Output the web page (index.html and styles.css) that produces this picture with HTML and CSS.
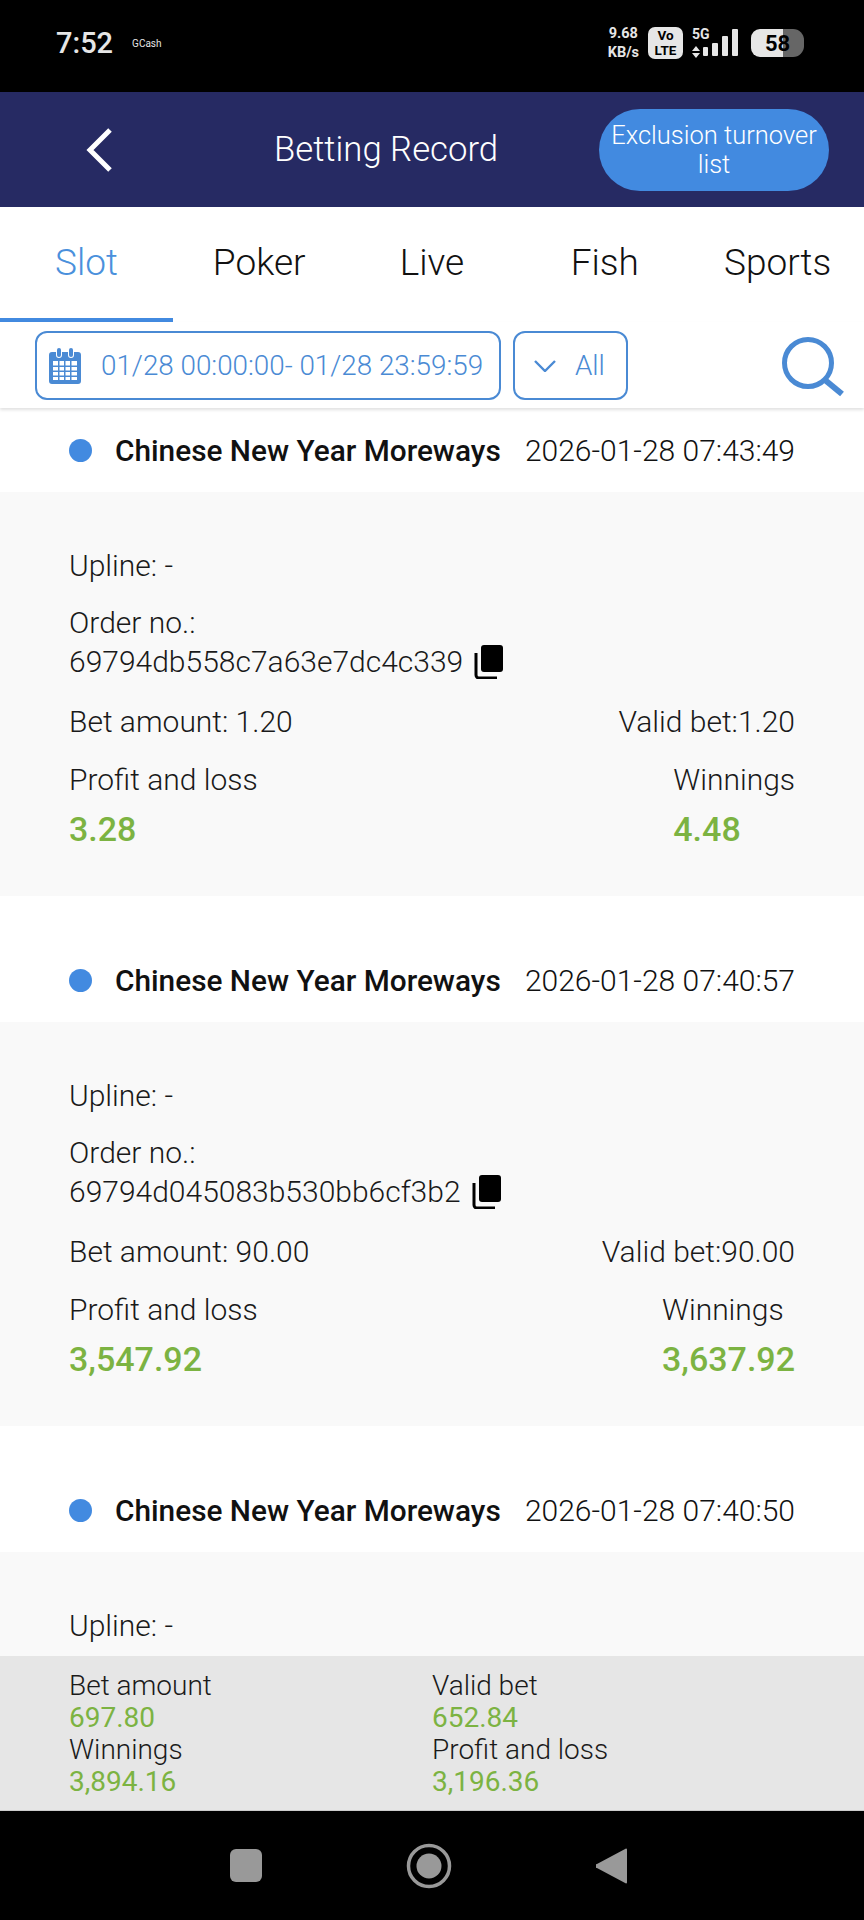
FILE: index.html
```html
<!DOCTYPE html>
<html lang="en">
<head>
    <meta charset="UTF-8">
    <meta name="viewport" content="width=device-width, initial-scale=1.0">
    <title>Betting Record</title>
    <link rel="stylesheet" href="styles.css">
</head>
<body>
    <div class="phone">
        <div class="status-bar">
            <span class="clock">7:52</span>
            <span class="carrier">GCash</span>
            <div class="status-icons">
                <div class="speed"><span>9.68</span><span>KB/s</span></div>
                <div class="volte"><span>Vo</span><span>LTE</span></div>
                <div class="network">
                    <span class="net-label">5G</span>
                    <svg class="arrows" width="8" height="12" viewBox="0 0 8 12"><path d="M4 0L8 5H0zM4 12L0 7h8z" fill="#e6e6e6"/></svg>
                </div>
                <svg class="signal" width="36" height="28" viewBox="0 0 36 28">
                    <rect x="0" y="18" width="5" height="9" rx="1" fill="#e6e6e6"/>
                    <rect x="9" y="14" width="6" height="13" rx="1" fill="#e6e6e6"/>
                    <rect x="19" y="7" width="6" height="20" rx="1" fill="#e6e6e6"/>
                    <rect x="29" y="0" width="6" height="27" rx="1" fill="#e6e6e6"/>
                </svg>
                <div class="battery"><span>58</span></div>
            </div>
        </div>

        <header class="top-bar">
            <svg class="back" width="28" height="46" viewBox="0 0 28 46"><path d="M25 3L5 23l20 20" fill="none" stroke="#ffffff" stroke-width="5"/></svg>
            <div class="title">Betting Record</div>
            <button class="exclusion">Exclusion turnover list</button>
        </header>

        <nav class="tabs">
            <div class="tab active">Slot</div>
            <div class="tab">Poker</div>
            <div class="tab">Live</div>
            <div class="tab">Fish</div>
            <div class="tab">Sports</div>
        </nav>

        <div class="filters">
            <div class="date-box">
                <svg class="calendar" width="32" height="36" viewBox="0 0 32 36">
                    <path d="M3 4h4v3a3 3 0 0 0 6 0V4h6v3a3 3 0 0 0 6 0V4h4a3 3 0 0 1 3 3v26a3 3 0 0 1-3 3H3a3 3 0 0 1-3-3V7a3 3 0 0 1 3-3z" fill="#4a8ad4"/>
                    <rect x="8" y="0" width="4" height="9" rx="2" fill="#4a8ad4"/>
                    <rect x="20" y="0" width="4" height="9" rx="2" fill="#4a8ad4"/>
                    <rect x="4" y="13" width="24" height="19" fill="#ffffff"/>
                    <g fill="#4a8ad4">
                        <rect x="9" y="13" width="1.5" height="19"/>
                        <rect x="15" y="13" width="1.5" height="19"/>
                        <rect x="21" y="13" width="1.5" height="19"/>
                        <rect x="4" y="17.5" width="24" height="1.5"/>
                        <rect x="4" y="22.5" width="24" height="1.5"/>
                        <rect x="4" y="27.5" width="24" height="1.5"/>
                    </g>
                </svg>
                <span>01/28 00:00:00- 01/28 23:59:59</span>
            </div>
            <div class="select-box">
                <svg width="22" height="12" viewBox="0 0 22 12"><path d="M1 1l10 10L21 1" fill="none" stroke="#4a8ad4" stroke-width="2.4"/></svg>
                <span>All</span>
            </div>
            <svg class="search" width="62" height="60" viewBox="0 0 62 60">
                <circle cx="26" cy="26" r="23.5" fill="none" stroke="#4a8ad4" stroke-width="5"/>
                <path d="M43 43l17 14" fill="none" stroke="#4a8ad4" stroke-width="6"/>
            </svg>
        </div>

        <main class="records">
            <section class="record first">
                <div class="record-head">
                    <span class="dot"></span>
                    <span class="game">Chinese New Year Moreways</span>
                    <span class="time">2026-01-28 07:43:49</span>
                </div>
                <div class="record-body">
                    <div class="upline">Upline: -</div>
                    <div class="order">
                        <div>Order no.:</div>
                        <div class="order-id">69794db558c7a63e7dc4c339
                            <svg class="copy" width="30" height="34" viewBox="0 0 30 34"><path d="M2 8v22a3 3 0 0 0 3 3h18" fill="none" stroke="#000000" stroke-width="3"/><rect x="7" y="0" width="22" height="27" rx="3" fill="#000000"/></svg>
                        </div>
                    </div>
                    <div class="amounts"><span>Bet amount: 1.20</span><span>Valid bet:1.20</span></div>
                    <div class="results">
                        <div class="result"><span>Profit and loss</span><strong>3.28</strong></div>
                        <div class="result"><span>Winnings</span><strong>4.48</strong></div>
                    </div>
                </div>
            </section>

            <section class="record">
                <div class="record-head">
                    <span class="dot"></span>
                    <span class="game">Chinese New Year Moreways</span>
                    <span class="time">2026-01-28 07:40:57</span>
                </div>
                <div class="record-body">
                    <div class="upline">Upline: -</div>
                    <div class="order">
                        <div>Order no.:</div>
                        <div class="order-id">69794d045083b530bb6cf3b2
                            <svg class="copy" width="30" height="34" viewBox="0 0 30 34"><path d="M2 8v22a3 3 0 0 0 3 3h18" fill="none" stroke="#000000" stroke-width="3"/><rect x="7" y="0" width="22" height="27" rx="3" fill="#000000"/></svg>
                        </div>
                    </div>
                    <div class="amounts"><span>Bet amount: 90.00</span><span>Valid bet:90.00</span></div>
                    <div class="results">
                        <div class="result"><span>Profit and loss</span><strong>3,547.92</strong></div>
                        <div class="result"><span>Winnings</span><strong>3,637.92</strong></div>
                    </div>
                </div>
            </section>

            <section class="record">
                <div class="record-head">
                    <span class="dot"></span>
                    <span class="game">Chinese New Year Moreways</span>
                    <span class="time">2026-01-28 07:40:50</span>
                </div>
                <div class="record-body">
                    <div class="upline">Upline: -</div>
                </div>
            </section>
        </main>

        <div class="summary">
            <div class="sum-item"><span>Bet amount</span><strong>697.80</strong></div>
            <div class="sum-item"><span>Valid bet</span><strong>652.84</strong></div>
            <div class="sum-item"><span>Winnings</span><strong>3,894.16</strong></div>
            <div class="sum-item"><span>Profit and loss</span><strong>3,196.36</strong></div>
        </div>

        <div class="nav-bar">
            <svg width="32" height="33" viewBox="0 0 32 33"><rect width="32" height="33" rx="6" fill="#999999"/></svg>
            <svg width="46" height="46" viewBox="0 0 46 46"><circle cx="23" cy="23" r="20.5" fill="none" stroke="#999999" stroke-width="3.5"/><circle cx="23" cy="23" r="12.5" fill="#999999"/></svg>
            <svg width="31" height="38" viewBox="0 0 32 38"><path d="M31 1a1 1 0 0 1 1 1v34a1 1 0 0 1-1 1L1 21a2 2 0 0 1 0-4z" fill="#999999"/></svg>
        </div>
    </div>
</body>
</html>
```

FILE: styles.css
```css
body {
    margin: 0;
    font-family: Roboto, "Liberation Sans", sans-serif;
    background-color: #ffffff;
    color: #1a1a1a;
}

.phone {
    width: 864px;
    height: 1920px;
    display: flex;
    flex-direction: column;
    overflow: hidden;
}

/* status bar */
.status-bar {
    height: 92px;
    flex: none;
    background-color: #000000;
    color: #e6e6e6;
    display: flex;
    align-items: center;
    padding: 0 60px 6px 56px;
    box-sizing: border-box;
}

.clock {
    font-size: 29px;
    font-weight: 500;
}

.carrier {
    font-size: 10px;
    margin-left: 19px;
}

.status-icons {
    margin-left: auto;
    display: flex;
    align-items: center;
}

.speed {
    display: flex;
    flex-direction: column;
    align-items: center;
    font-size: 14.5px;
    font-weight: 700;
    line-height: 19px;
}

.volte {
    width: 35px;
    height: 32px;
    margin-left: 9px;
    background-color: #e6e6e6;
    color: #000000;
    border-radius: 7px;
    display: flex;
    flex-direction: column;
    align-items: center;
    justify-content: center;
    font-size: 13.5px;
    font-weight: 700;
    line-height: 15px;
}

.network {
    margin-left: 9px;
    width: 20px;
    height: 30px;
    display: flex;
    flex-direction: column;
    justify-content: space-between;
}

.net-label {
    font-size: 14px;
    font-weight: 700;
    line-height: 13px;
}

.arrows {
    display: block;
}

.signal {
    margin-left: -9px;
}

.battery {
    margin-left: 12px;
    width: 53px;
    height: 28px;
    border-radius: 9px 11px 11px 9px;
    background: linear-gradient(to right, #e6e6e6 60%, #666666 60%);
    color: #000000;
    display: flex;
    align-items: center;
    justify-content: center;
    font-size: 22px;
    font-weight: 700;
}

/* header */
.top-bar {
    height: 115px;
    flex: none;
    background-color: #262a63;
    display: flex;
    align-items: center;
    box-sizing: border-box;
    padding-left: 85px;
    padding-right: 35px;
}

.title {
    margin-left: 161px;
    margin-bottom: 1px;
    font-size: 34.7px;
    font-weight: 300;
    color: #ffffff;
    white-space: nowrap;
}

.exclusion {
    margin-left: auto;
    width: 230px;
    height: 82px;
    border: none;
    border-radius: 41px;
    background-color: #428ae0;
    color: #ffffff;
    font-family: inherit;
    font-size: 25.5px;
    font-weight: 300;
    line-height: 29px;
    padding: 0 8px;
}

/* tabs */
.tabs {
    height: 115px;
    flex: none;
    display: flex;
    box-sizing: border-box;
}

.tab {
    flex: 1;
    text-align: center;
    font-size: 37px;
    font-weight: 300;
    line-height: 112px;
    color: #111111;
}

.tab.active {
    color: #4a90dc;
    border-bottom: 4px solid #428ae0;
    height: 111px;
}

/* filters */
.filters {
    height: 86px;
    flex: none;
    display: flex;
    align-items: flex-start;
    box-sizing: border-box;
    padding: 9px 20px 0 35px;
    box-shadow: 0 2px 3px rgba(0, 0, 0, 0.12);
    position: relative;
    color: #4a8ad4;
}

.date-box {
    width: 466px;
    height: 69px;
    box-sizing: border-box;
    border: 2.5px solid #4a8ad4;
    border-radius: 12px;
    display: flex;
    align-items: center;
    padding-left: 12px;
    font-size: 27.8px;
    font-weight: 300;
    white-space: nowrap;
}

.calendar {
    margin-right: 20px;
    flex: none;
}

.select-box {
    width: 115px;
    height: 69px;
    margin-left: 12px;
    box-sizing: border-box;
    border: 2.5px solid #4a8ad4;
    border-radius: 12px;
    display: flex;
    align-items: center;
    padding-left: 19px;
    gap: 19px;
    font-size: 27.8px;
    font-weight: 300;
}

.search {
    margin-left: auto;
    margin-top: 6px;
}

/* records */
.records {
    flex: 1 1 0;
    min-height: 0;
    overflow: hidden;
}

.record {
    padding-top: 42px;
}

.record.first {
    padding-top: 0;
}

.record-head {
    height: 84px;
    display: flex;
    align-items: center;
    padding: 0 69px;
    font-size: 30px;
}

.dot {
    width: 23px;
    height: 23px;
    border-radius: 50%;
    background-color: #428ae0;
    flex: none;
}

.game {
    margin-left: 23px;
    font-size: 29.8px;
    font-weight: 500;
    color: #111111;
    white-space: nowrap;
}

.time {
    margin-left: auto;
    font-weight: 300;
    color: #111111;
    white-space: nowrap;
}

.record-body {
    min-height: 404px;
    box-sizing: border-box;
    padding: 54px 69px 0;
    background-color: #f9f9f9;
    font-size: 30px;
    font-weight: 300;
}

.upline {
    line-height: 40px;
}

.order {
    margin-top: 17px;
    line-height: 39px;
}

.order-id {
    display: flex;
    align-items: center;
    gap: 11px;
}

.copy {
    flex: none;
}

.amounts {
    margin-top: 21px;
    line-height: 40px;
    display: flex;
    justify-content: space-between;
}

.results {
    margin-top: 18px;
    display: flex;
    justify-content: space-between;
}

.result {
    display: flex;
    flex-direction: column;
    line-height: 40px;
}

.result strong {
    margin-top: 9px;
    font-size: 34px;
    font-weight: 500;
    color: #7cb342;
}

/* totals */
.summary {
    height: 155px;
    flex: none;
    box-sizing: border-box;
    padding: 14px 0 0 69px;
    background-color: #e6e6e6;
    border-bottom: 1px solid #cccccc;
    display: grid;
    grid-template-columns: 363px 1fr;
    align-content: start;
    font-size: 28px;
    font-weight: 300;
}

.sum-item {
    display: flex;
    flex-direction: column;
    line-height: 32px;
}

.sum-item strong {
    font-weight: 400;
    font-size: 28px;
    color: #7cb342;
}

/* android nav */
.nav-bar {
    flex: none;
    height: 109px;
    background-color: #000000;
    display: flex;
    align-items: center;
    padding-left: 230px;
    gap: 144px;
}
```
